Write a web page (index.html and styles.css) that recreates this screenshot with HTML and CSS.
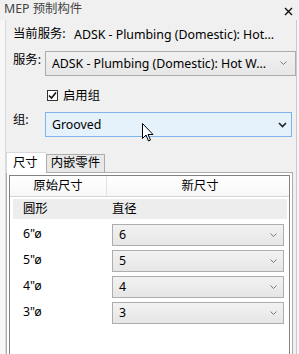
FILE: index.html
```html
<!DOCTYPE html>
<html lang="zh">
<head>
    <meta charset="UTF-8">
    <title>MEP 预制构件</title>
    <link rel="stylesheet" href="styles.css">
</head>
<body>
    <div class="titlebar">
        <span class="title">MEP 预制构件</span>
        <svg class="close" width="9" height="9" viewBox="0 0 9 9">
            <path d="M1 1 L8 8 M8 1 L1 8" stroke="#111" stroke-width="1.4" fill="none"/>
        </svg>
    </div>

    <div class="dialog">
        <div class="row current">
            <span class="label">当前服务:</span>
            <span class="value">ADSK - Plumbing (Domestic): Hot...</span>
        </div>

        <div class="row">
            <span class="label">服务:</span>
            <div class="select service">
                <span>ADSK - Plumbing (Domestic): Hot W...</span>
                <svg class="chev" width="7" height="5" viewBox="0 0 7 5"><path d="M0.5 0.5 L3.5 3.5 L6.5 0.5" stroke="#7a7a7a" fill="none"/></svg>
            </div>
        </div>

        <div class="check-row">
            <span class="checkbox">
                <svg width="9" height="9" viewBox="0 0 9 9"><path d="M1 4.5 L3.5 7 L8 1.5" stroke="#111" stroke-width="1.6" fill="none"/></svg>
            </span>
            <span>启用组</span>
        </div>

        <div class="row">
            <span class="label">组:</span>
            <div class="select group">
                <span>Grooved</span>
                <svg class="chev" width="9" height="6" viewBox="0 0 9 6"><path d="M1 1 L4.5 4.5 L8 1" stroke="#222" stroke-width="1.6" fill="none"/></svg>
            </div>
        </div>

        <div class="tabs">
            <span class="tab active">尺寸</span>
            <span class="tab">内嵌零件</span>
        </div>

        <div class="panel">
            <div class="grid">
                <div class="grid-head">
                    <span class="col-a">原始尺寸</span>
                    <span class="col-b">新尺寸</span>
                </div>
                <div class="group-row">
                    <span class="name">圆形</span>
                    <span>直径</span>
                </div>
                <div class="size-row">
                    <span class="name">6"ø</span>
                    <div class="select small"><span>6</span><svg class="chev" width="7" height="5" viewBox="0 0 7 5"><path d="M0.5 0.5 L3.5 3.5 L6.5 0.5" stroke="#7a7a7a" fill="none"/></svg></div>
                </div>
                <div class="size-row">
                    <span class="name">5"ø</span>
                    <div class="select small"><span>5</span><svg class="chev" width="7" height="5" viewBox="0 0 7 5"><path d="M0.5 0.5 L3.5 3.5 L6.5 0.5" stroke="#7a7a7a" fill="none"/></svg></div>
                </div>
                <div class="size-row">
                    <span class="name">4"ø</span>
                    <div class="select small"><span>4</span><svg class="chev" width="7" height="5" viewBox="0 0 7 5"><path d="M0.5 0.5 L3.5 3.5 L6.5 0.5" stroke="#7a7a7a" fill="none"/></svg></div>
                </div>
                <div class="size-row">
                    <span class="name">3"ø</span>
                    <div class="select small"><span>3</span><svg class="chev" width="7" height="5" viewBox="0 0 7 5"><path d="M0.5 0.5 L3.5 3.5 L6.5 0.5" stroke="#7a7a7a" fill="none"/></svg></div>
                </div>
            </div>
        </div>
    </div>

    <!-- mouse pointer over the group select -->
    <svg class="cursor" width="12" height="19" viewBox="0 0 12 19">
        <path d="M0.5 0.5 L0.5 15.5 L4 12 L6.5 18 L8.5 17 L6 11.5 L11 11.5 Z" fill="#fff" stroke="#000" stroke-width="1"/>
    </svg>
</body>
</html>
```

FILE: styles.css
```css
* {
    margin: 0;
    padding: 0;
    box-sizing: border-box;
}

body {
    width: 299px;
    height: 354px;
    overflow: hidden;
    background: #f7f7f7;
    font-family: "Noto Sans", "Noto Sans CJK SC", sans-serif;
    font-size: 12.35px;
    color: #000;
    position: relative;
}

.titlebar {
    height: 20px;
    display: flex;
    align-items: center;
    justify-content: space-between;
    padding: 0 6px 2px 4px;
    background: #f0f0f0;
}

.title {
    color: #444;
    line-height: 16px;
}

.close {
    display: block;
    margin-top: 4px;
}

.dialog {
    height: 334px;
    overflow: hidden;
    margin: 0 2px 0 5px;
    border-left: 1px solid #dadada;
    border-right: 1px solid #c8c8c8;
    background: #f0f0f0;
    padding-top: 4px;
}

.row {
    display: flex;
    align-items: center;
    padding-left: 7px;
}

.row .label {
    width: 32px;
    line-height: 16px;
}

.current {
    height: 20px;
}

.current .label {
    width: 61px;
}

.select {
    display: flex;
    align-items: center;
    justify-content: space-between;
    border: 1px solid #acacac;
    background: linear-gradient(#f2f2f2, #e6e6e6);
    line-height: 16px;
}

.service {
    width: 252px;
    height: 25px;
    margin-top: 7px;
    padding: 0 8px 0 6px;
}

.check-row {
    display: flex;
    align-items: center;
    height: 16px;
    margin: 11px 0 0 41px;
}

.checkbox {
    width: 11px;
    height: 11px;
    border: 1px solid #333;
    background: #fff;
    display: flex;
    align-items: center;
    justify-content: center;
    margin-right: 5px;
}

.group {
    width: 247px;
    height: 25px;
    margin-top: 9px;
    padding: 0 4px 0 6px;
    border-color: #7eb4ea;
    background: #e5f1fb;
}

.tabs {
    display: flex;
    align-items: flex-end;
    height: 20px;
    margin: 15px 0 0 0;
    position: relative;
    z-index: 1;
}

.tab {
    height: 18px;
    line-height: 16px;
    padding: 0 4px;
    border: 1px solid #acacac;
    border-bottom: none;
    background: #e8e8e8;
}

.tab.active {
    height: 21px;
    margin-bottom: -1px;
    padding: 2px 8px 0 6px;
    background: #fff;
    border-color: #d9d9d9;
    border-right: none;
}

.panel {
    width: 287px;
    height: 182px;
    border: 1px solid #adadad;
    border-bottom: none;
    background: #fff;
    padding: 2px 2px 0 2px;
}

.grid {
    height: 100%;
    border: 1px solid #828282;
    border-bottom: none;
}

.grid-head {
    display: flex;
    height: 21px;
    border-bottom: 1px solid #d5d5d5;
    background: linear-gradient(#fff, #f7f7f7);
    line-height: 20px;
}

.col-a {
    width: 97px;
    text-align: center;
    border-right: 1px solid #e3e3e3;
}

.col-b {
    flex: 1;
    text-align: center;
    padding-left: 4px;
}

.group-row {
    display: flex;
    align-items: center;
    height: 20px;
    margin: 2px 2px 0 3px;
    background: #ededed;
    padding-left: 10px;
    line-height: 16px;
}

.name {
    width: 89px;
}

.size-row {
    display: flex;
    align-items: center;
    height: 22px;
    margin: 5px 0 0 13px;
}

.size-row + .size-row {
    margin-top: 4px;
}

.size-row .name {
    margin-top: -3px;
}

.small {
    width: 172px;
    height: 22px;
    padding: 0 6px 0 6px;
    border-color: #adadad;
}

.cursor {
    position: absolute;
    left: 142px;
    top: 123px;
}
```
